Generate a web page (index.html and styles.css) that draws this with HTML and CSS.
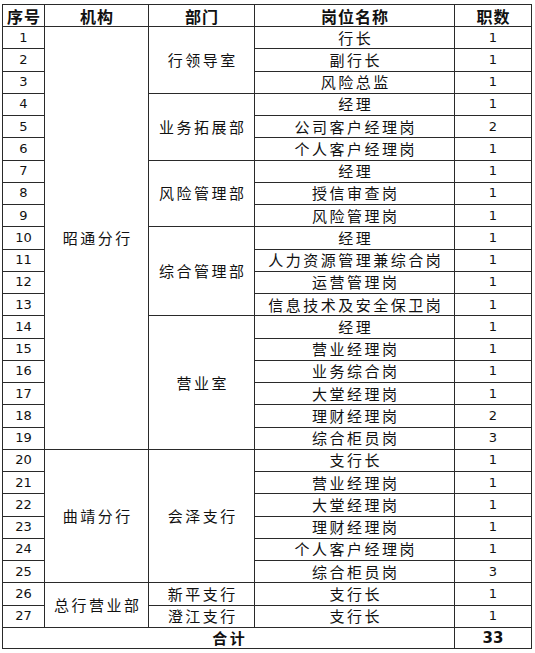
FILE: index.html
```html
<!DOCTYPE html>
<html lang="zh-CN">
<head>
<meta charset="utf-8">
<link rel="stylesheet" href="styles.css">
</head>
<body>
<div class="page">
<table class="sheet">
<colgroup>
<col class="c-no"><col class="c-org"><col class="c-dept"><col class="c-pos"><col class="c-num">
</colgroup>
<thead>
<tr class="head"><th>序号</th><th>机构</th><th>部门</th><th>岗位名称</th><th>职数</th></tr>
</thead>
<tbody>
<tr><td class="n">1</td><td rowspan="19">昭通分行</td><td rowspan="3">行领导室</td><td>行长</td><td class="n">1</td></tr>
<tr><td class="n">2</td><td>副行长</td><td class="n">1</td></tr>
<tr><td class="n">3</td><td>风险总监</td><td class="n">1</td></tr>
<tr><td class="n">4</td><td rowspan="3">业务拓展部</td><td>经理</td><td class="n">1</td></tr>
<tr><td class="n">5</td><td>公司客户经理岗</td><td class="n">2</td></tr>
<tr><td class="n">6</td><td>个人客户经理岗</td><td class="n">1</td></tr>
<tr><td class="n">7</td><td rowspan="3">风险管理部</td><td>经理</td><td class="n">1</td></tr>
<tr><td class="n">8</td><td>授信审查岗</td><td class="n">1</td></tr>
<tr><td class="n">9</td><td>风险管理岗</td><td class="n">1</td></tr>
<tr><td class="n">10</td><td rowspan="4">综合管理部</td><td>经理</td><td class="n">1</td></tr>
<tr><td class="n">11</td><td>人力资源管理兼综合岗</td><td class="n">1</td></tr>
<tr><td class="n">12</td><td>运营管理岗</td><td class="n">1</td></tr>
<tr><td class="n">13</td><td>信息技术及安全保卫岗</td><td class="n">1</td></tr>
<tr><td class="n">14</td><td rowspan="6">营业室</td><td>经理</td><td class="n">1</td></tr>
<tr><td class="n">15</td><td>营业经理岗</td><td class="n">1</td></tr>
<tr><td class="n">16</td><td>业务综合岗</td><td class="n">1</td></tr>
<tr><td class="n">17</td><td>大堂经理岗</td><td class="n">1</td></tr>
<tr><td class="n">18</td><td>理财经理岗</td><td class="n">2</td></tr>
<tr><td class="n">19</td><td>综合柜员岗</td><td class="n">3</td></tr>
<tr><td class="n">20</td><td rowspan="6">曲靖分行</td><td rowspan="6">会泽支行</td><td>支行长</td><td class="n">1</td></tr>
<tr><td class="n">21</td><td>营业经理岗</td><td class="n">1</td></tr>
<tr><td class="n">22</td><td>大堂经理岗</td><td class="n">1</td></tr>
<tr><td class="n">23</td><td>理财经理岗</td><td class="n">1</td></tr>
<tr><td class="n">24</td><td>个人客户经理岗</td><td class="n">1</td></tr>
<tr><td class="n">25</td><td>综合柜员岗</td><td class="n">3</td></tr>
<tr><td class="n">26</td><td rowspan="2">总行营业部</td><td>新平支行</td><td>支行长</td><td class="n">1</td></tr>
<tr><td class="n">27</td><td>澄江支行</td><td>支行长</td><td class="n">1</td></tr>
</tbody>
<tfoot>
<tr class="total"><td colspan="4">合计</td><td class="n">33</td></tr>
</tfoot>
</table>
</div>
</body>
</html>
```

FILE: styles.css
```css
html, body {
  margin: 0;
  padding: 0;
  background: #ffffff;
}

.page {
  padding: 4px 0 0 2px;
}

.sheet {
  border-collapse: collapse;
  table-layout: fixed;
  width: 529px;
  font-family: "Noto Sans CJK SC", "DejaVu Sans", sans-serif;
  color: #111;
}

.c-no { width: 42px; }
.c-org { width: 104px; }
.c-dept { width: 106px; }
.c-pos { width: 200px; }
.c-num { width: 77px; }

.sheet th,
.sheet td {
  border: 1px solid #2a2a2a;
  padding: 0;
  text-align: center;
  vertical-align: middle;
  white-space: nowrap;
  overflow: hidden;
  font-size: 15px;
  line-height: 18px;
  letter-spacing: 2.5px;
  text-indent: 2.5px;
  font-weight: 400;
}

.sheet tbody tr {
  height: 22.26px;
}

.sheet .head {
  height: 22px;
}

.sheet th {
  font-weight: 700;
  font-size: 16px;
  letter-spacing: 1px;
  text-indent: 1px;
}

.sheet td.n {
  font-family: "DejaVu Sans", sans-serif;
  font-size: 13px;
  letter-spacing: 0;
  text-indent: 0;
}

.sheet .total {
  height: 21px;
}

.sheet .total td {
  font-weight: 700;
  font-size: 15px;
}

.sheet .total td.n {
  font-weight: 700;
}
```
